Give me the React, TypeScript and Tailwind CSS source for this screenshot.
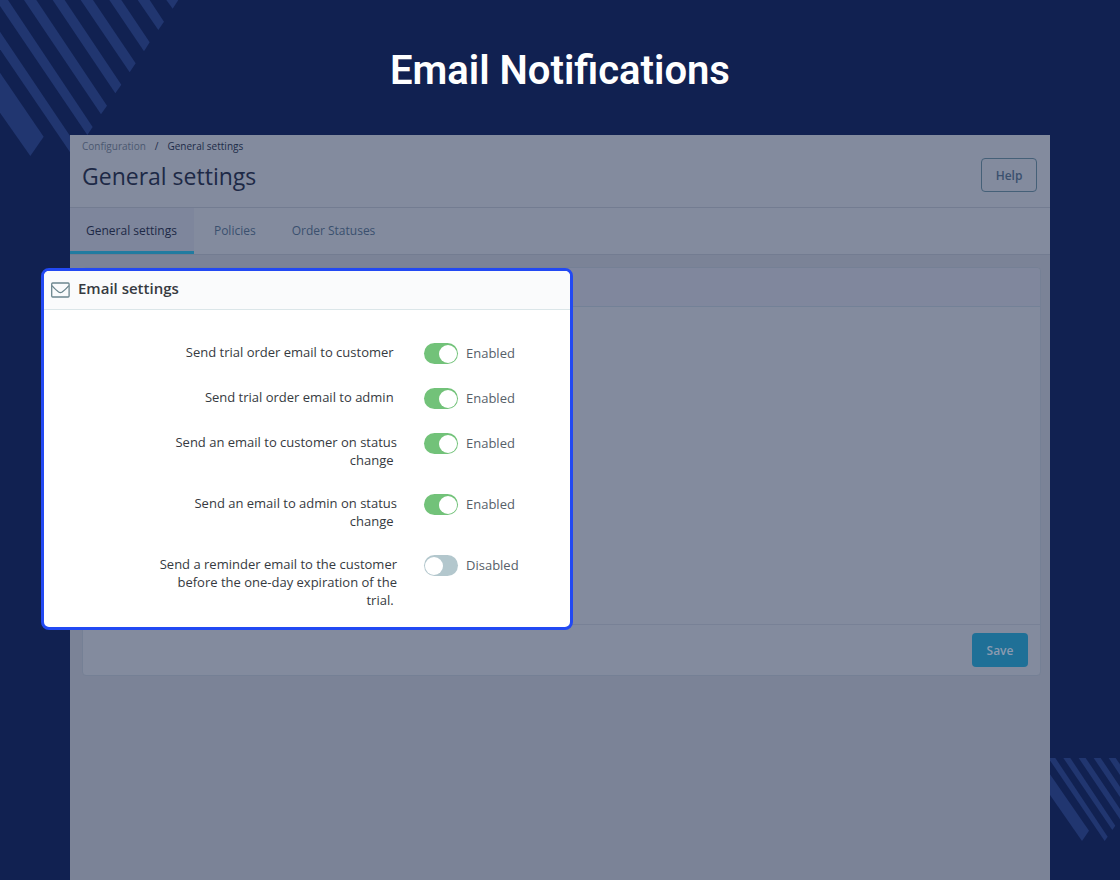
import * as React from "react";

interface EmailSetting {
  id: string;
  label: string;
  enabled: boolean;
}

const TABS = ["General settings", "Policies", "Order Statuses"];

const EMAIL_SETTINGS: EmailSetting[] = [
  { id: "trial-customer", label: "Send trial order email to customer", enabled: true },
  { id: "trial-admin", label: "Send trial order email to admin", enabled: true },
  { id: "status-customer", label: "Send an email to customer on status change", enabled: true },
  { id: "status-admin", label: "Send an email to admin on status change", enabled: true },
  {
    id: "reminder",
    label: "Send a reminder email to the customer before the one-day expiration of the trial.",
    enabled: false,
  },
];

function StripesTop() {
  return (
    <svg
      className="absolute left-0 top-0 h-[170px] w-[200px] fill-[#213670]"
      viewBox="0 0 600 510"
      aria-hidden="true"
    >
      <polygon points="0,218 131,410 91,468 0,338" />
      <polygon points="0,95 236,446 220,471 0,148" />
      <polygon points="-12,0 24,0 278,381 262,405" />
      <polygon points="72,0 109,0 321,317 303,343" />
      <polygon points="158,0 194,0 364,254 346,280" />
      <polygon points="242,0 279,0 407,190 389,217" />
      <polygon points="328,0 364,0 449,127 432,154" />
      <polygon points="413,0 449,0 492,65 475,90" />
      <polygon points="499,0 535,0 518,26" />
    </svg>
  );
}

function StripesBottom() {
  return (
    <svg
      className="absolute bottom-[38px] right-0 h-[84px] w-[70px] fill-[#213670]"
      viewBox="60 54 210 252"
      aria-hidden="true"
    >
      <polygon points="60,103 177,272 156,303 60,165" />
      <polygon points="55,54 76,54 233,290 224,303" />
      <polygon points="100,54 121,54 256,257 247,270" />
      <polygon points="146,54 167,54 270,207 270,238" />
      <polygon points="191,54 212,54 270,140 270,171" />
      <polygon points="236,54 257,54 270,73 270,105" />
    </svg>
  );
}

function EnvelopeIcon() {
  return (
    <svg
      className="h-4 w-[19px] text-[#6c868e]"
      viewBox="0 0 19 16"
      fill="none"
      stroke="currentColor"
      strokeWidth="1.3"
      strokeLinejoin="round"
      aria-hidden="true"
    >
      <rect x="0.7" y="1" width="17.4" height="14" rx="1" />
      <path d="M0.9 3.6 Q4 7.2 7.6 10 Q9.4 11.2 11.2 10 Q14.9 7.2 17.9 3.6" />
    </svg>
  );
}

function SettingRow({ setting }: { setting: EmailSetting }) {
  const [checked, setChecked] = React.useState(setting.enabled);

  return (
    <div className="grid grid-cols-[245px_1fr] items-start gap-x-[27px]">
      <label htmlFor={setting.id} className="pb-px text-right text-[13px] leading-[18px] text-[#363a41]">
        {setting.label}
        {"\u00a0"}
      </label>
      <div className="flex items-center gap-2">
        <input
          id={setting.id}
          type="checkbox"
          role="switch"
          checked={checked}
          onChange={(e) => setChecked(e.target.checked)}
          className="flex h-[21px] w-[34px] shrink-0 cursor-pointer appearance-none items-center rounded-full bg-[#b3c7cd] px-px before:size-[18px] before:rounded-full before:bg-white checked:justify-end checked:bg-[#72c279]"
        />
        <span className="text-[13px] leading-[21px] text-[#576069]">{checked ? "Enabled" : "Disabled"}</span>
      </div>
    </div>
  );
}

function EmailSettingsPanel() {
  return (
    <section className="absolute -left-[29px] top-[133px] w-[532px] overflow-hidden rounded-lg border-3 border-[#2249f3] bg-white">
      <header className="flex h-[39px] items-center gap-2 border-b border-[#dbe6e9] bg-[#fafbfc] px-[7px]">
        <EnvelopeIcon />
        <h2 className="pb-1 text-[15px] font-semibold leading-5 text-[#363a41]">Email settings</h2>
      </header>
      <div className="flex flex-col gap-6 pb-[17px] pl-[108px] pt-[33px]">
        {EMAIL_SETTINGS.map((setting) => (
          <SettingRow key={setting.id} setting={setting} />
        ))}
      </div>
    </section>
  );
}

export default function App() {
  return (
    <div className="relative flex min-h-screen flex-col bg-[#112151] font-['Open_Sans',sans-serif]">
      <StripesTop />
      <StripesBottom />

      <h1 className="relative pb-10 pt-[47px] text-center font-[Roboto,sans-serif] text-[40px] font-semibold leading-[48px] text-white">
        Email Notifications
      </h1>

      <main className="relative mx-[70px] flex flex-1 flex-col bg-[#7b8397]">
        <header className="flex h-[73px] items-start justify-between border-b border-[#737c91] bg-[#838b9e] pl-3 pr-[13px]">
          <div>
            <nav className="flex gap-[9px] pt-1 text-[10px] leading-[14px] text-[#1d2c49]" aria-label="Breadcrumb">
              <a href="#configuration" className="text-[#4b5870]">
                Configuration
              </a>
              <span>/</span>
              <a href="#general">General settings</a>
            </nav>
            <h2 className="pt-[7px] text-[23px] leading-8 text-[#1d2946]">General settings</h2>
          </div>
          <button
            type="button"
            className="mt-[23px] h-[34px] w-14 rounded border border-[#456078] pt-px text-xs font-semibold text-[#3a506e]"
          >
            Help
          </button>
        </header>

        <nav className="flex h-[47px] border-b border-[#737c91] bg-[#838b9e] text-xs" aria-label="Settings">
          {TABS.map((tab, i) => (
            <a
              key={tab}
              href="#tab"
              className={
                i === 0
                  ? "flex items-center border-b-3 border-[#217ba0] bg-[#7e869c] px-4 pr-[17px] pt-0.5 text-[#1d2946]"
                  : "flex items-center border-b-3 border-transparent pl-5 pr-4 pt-0.5 text-[#3a506e]"
              }
            >
              {tab}
            </a>
          ))}
        </nav>

        <section className="ml-3 mr-[9px] mt-3 flex flex-col rounded border border-[#758095] bg-[#838b9e]">
          <div className="h-[39px] rounded-t border-b border-[#738197] bg-[#80879d]" />
          <div className="h-[317px]" />
          <footer className="flex justify-end border-t border-[#788196] px-3 py-2">
            <button
              type="button"
              className="h-[34px] w-14 rounded-sm bg-[#1f7097] pt-px text-xs font-semibold text-[#8c9bb0]"
            >
              Save
            </button>
          </footer>
        </section>

        <EmailSettingsPanel />
      </main>
    </div>
  );
}
